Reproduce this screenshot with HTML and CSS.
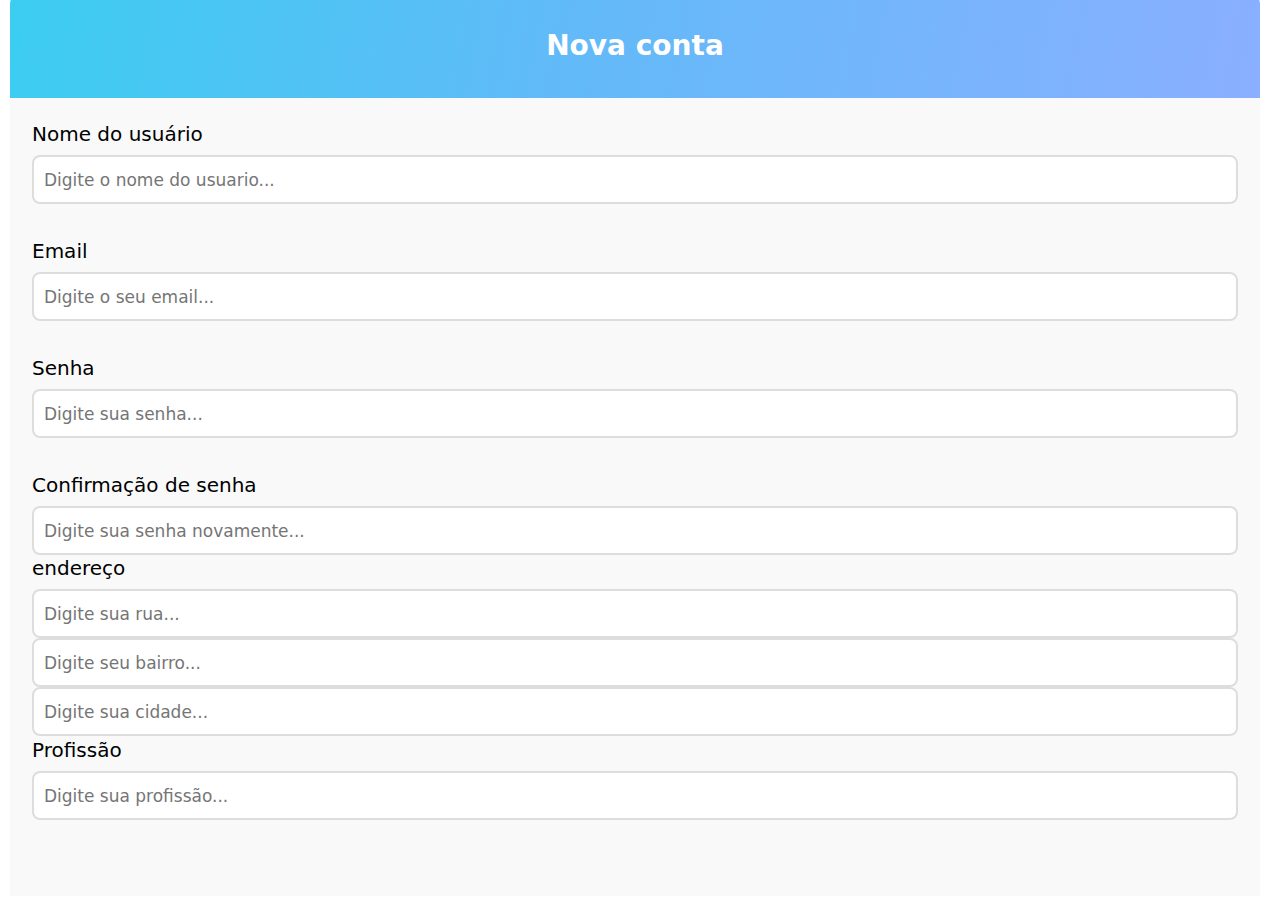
FILE: index.html
```html
<!DOCTYPE html>
<html lang="pt-BR">
<head>
<meta charset="utf-8">
<title>Nova conta</title>
<link rel="stylesheet" href="styles.css">
</head>
<body>
<div class="card">
  <div class="card-header">
    <h1 class="title">Nova conta</h1>
  </div>
  <form class="form">
    <div class="field">
      <label class="label">Nome do usuário</label>
      <input class="input" type="text" placeholder="Digite o nome do usuario...">
    </div>
    <div class="field">
      <label class="label">Email</label>
      <input class="input" type="email" placeholder="Digite o seu email...">
    </div>
    <div class="field">
      <label class="label">Senha</label>
      <input class="input" type="password" placeholder="Digite sua senha...">
    </div>
    <div class="field field-tight">
      <label class="label">Confirmação de senha</label>
      <input class="input" type="password" placeholder="Digite sua senha novamente...">
    </div>
    <div class="field field-tight">
      <label class="label">endereço</label>
      <input class="input" type="text" placeholder="Digite sua rua...">
      <input class="input" type="text" placeholder="Digite seu bairro...">
      <input class="input" type="text" placeholder="Digite sua cidade...">
    </div>
    <div class="field field-tight field-last">
      <label class="label">Profissão</label>
      <input class="input" type="text" placeholder="Digite sua profissão...">
    </div>
  </form>
</div>
</body>
</html>
```
FILE: styles.css
```css
html, body {
  margin: 0;
  padding: 0;
  background: #ffffff;
  height: 897px;
  overflow: hidden;
}

body {
  font-family: "DejaVu Sans", "Noto Sans", sans-serif;
}

.card {
  width: 1250px;
  height: 902px;
  margin: -6px 0 0 10px;
  background: #f9f9f9;
  border-radius: 10px 10px 0 0;
  overflow: hidden;
  display: flex;
  flex-direction: column;
}

.card-header {
  height: 104px;
  box-sizing: border-box;
  padding-bottom: 2px;
  display: flex;
  align-items: center;
  justify-content: center;
  background: linear-gradient(100deg, #3ccdf1 0%, #62baf8 45%, #8aafff 100%);
}

.title {
  margin: 0;
  color: #ffffff;
  font-size: 28px;
  font-weight: 700;
}

.form {
  padding: 23px 22px 0 22px;
  display: flex;
  flex-direction: column;
}

.field {
  display: flex;
  flex-direction: column;
  margin-bottom: 34px;
}

.field-tight {
  margin-bottom: 0;
}

.field-last {
  margin-top: 1px;
}

.label {
  font-size: 20px;
  line-height: 27px;
  color: #000000;
  margin-bottom: 7px;
}

.input {
  box-sizing: border-box;
  width: 100%;
  height: 49px;
  margin: 0;
  padding: 0 10px;
  border: 2px solid #dddddd;
  border-radius: 8px;
  background: #ffffff;
  font-family: inherit;
  font-size: 17px;
  color: #333333;
  outline: none;
}

.input::placeholder {
  color: #757575;
}
```
